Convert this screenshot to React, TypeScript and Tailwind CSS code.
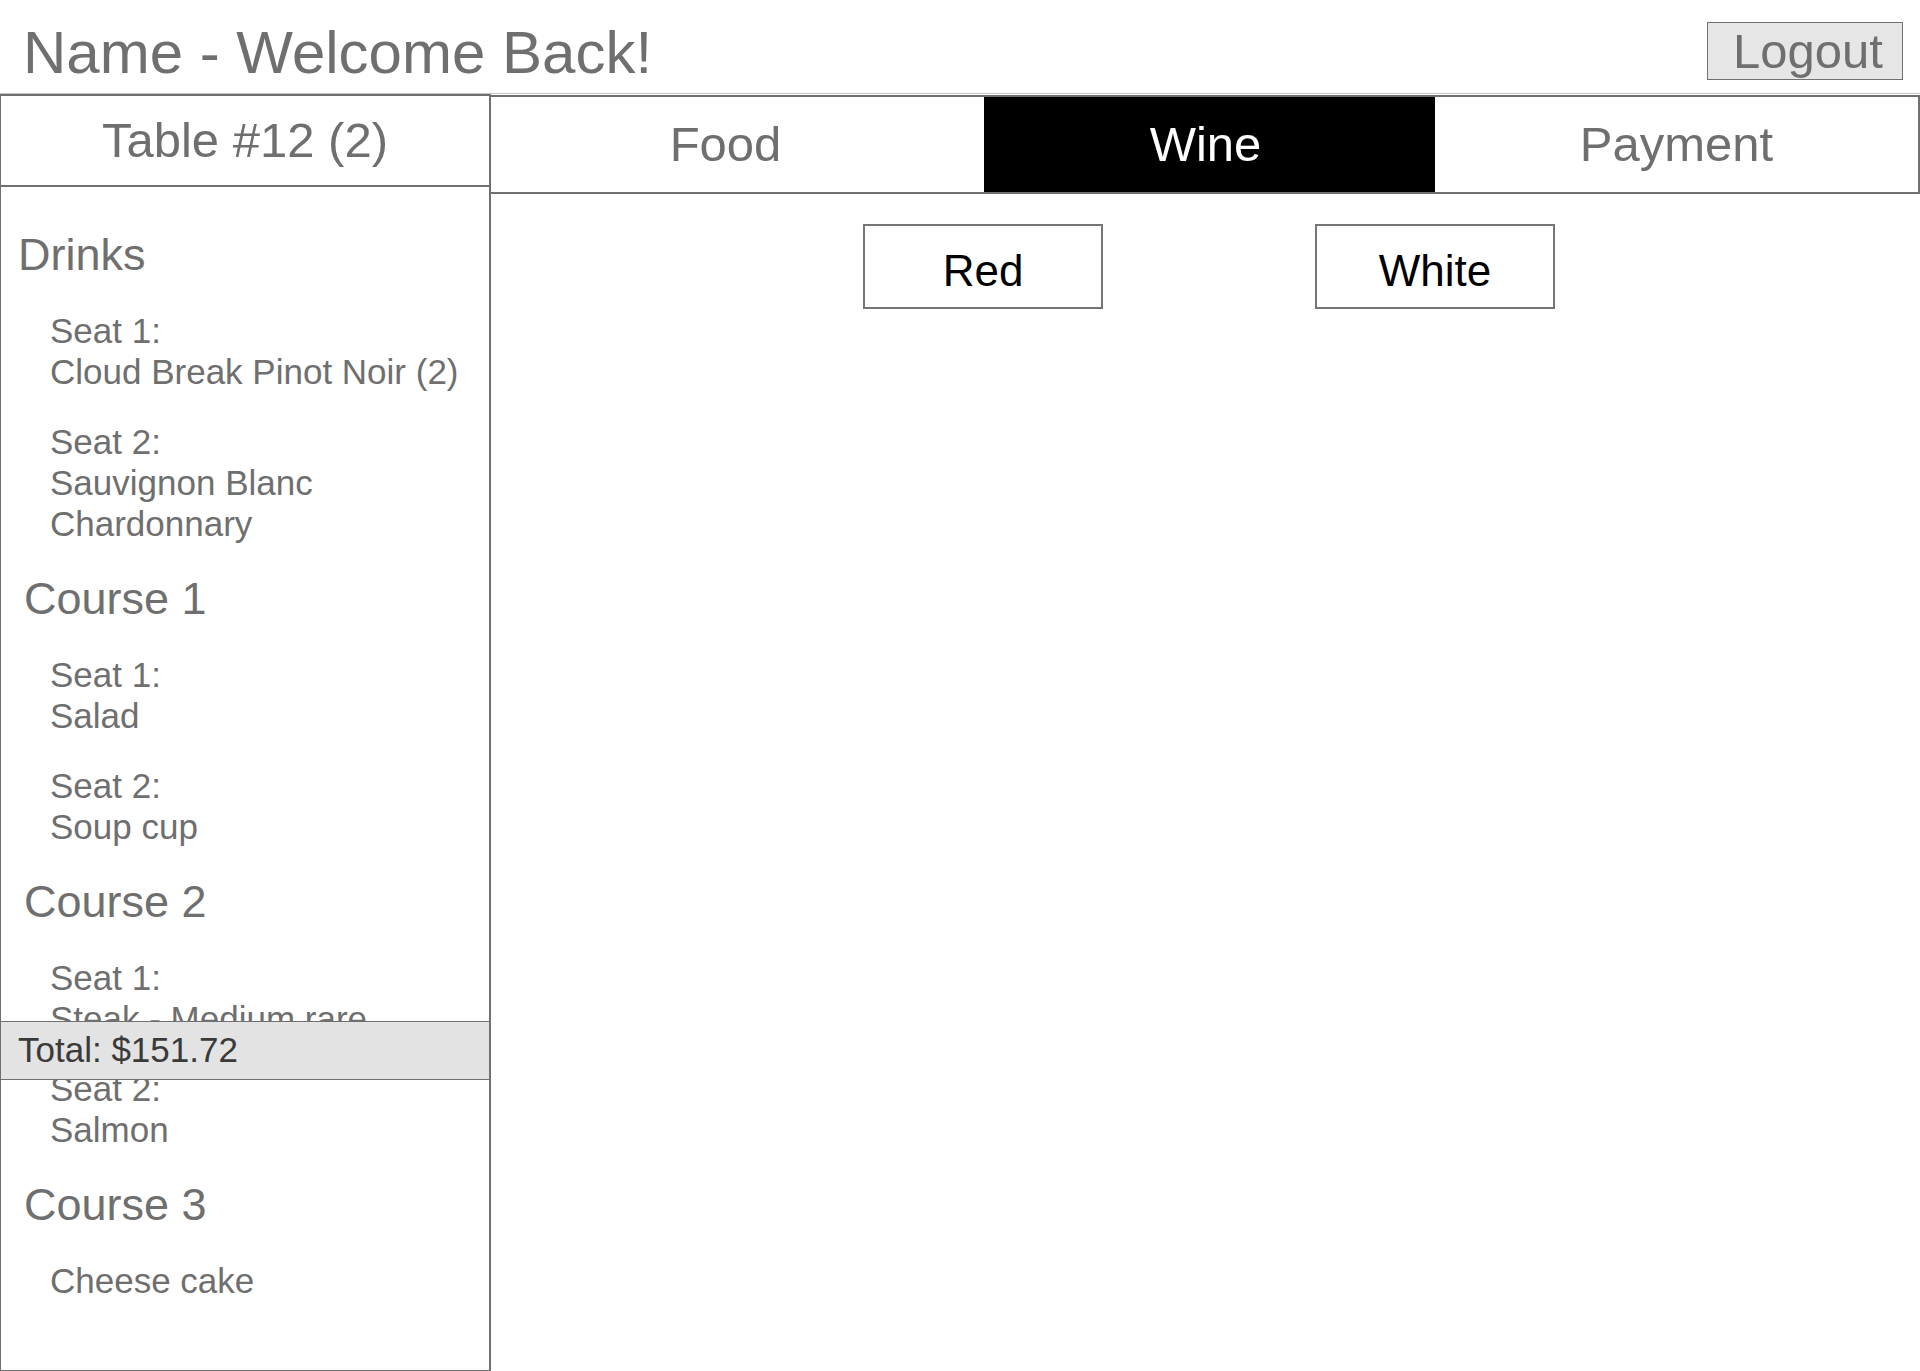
import React from 'react';

type Block = { kind: 'heading'; text: string; indent: string } | { kind: 'item'; lines: string[] };

const order: Block[] = [
  { kind: 'heading', text: 'Drinks', indent: 'pl-[17px]' },
  { kind: 'item', lines: ['Seat 1:', 'Cloud Break Pinot Noir (2)'] },
  { kind: 'item', lines: ['Seat 2:', 'Sauvignon Blanc', 'Chardonnary'] },
  { kind: 'heading', text: 'Course 1', indent: 'pl-[23px]' },
  { kind: 'item', lines: ['Seat 1:', 'Salad'] },
  { kind: 'item', lines: ['Seat 2:', 'Soup cup'] },
  { kind: 'heading', text: 'Course 2', indent: 'pl-[23px]' },
  { kind: 'item', lines: ['Seat 1:', 'Steak - Medium rare'] },
  { kind: 'item', lines: ['Seat 2:', 'Salmon'] },
  { kind: 'heading', text: 'Course 3', indent: 'pl-[23px]' },
  { kind: 'item', lines: ['Cheese cake'] },
];

const tabs = [
  { name: 'Food', width: 'w-[493px] pr-[24px]' },
  { name: 'Wine', width: 'w-[451px] pr-[8px]' },
  { name: 'Payment', width: 'flex-1' },
];

export default function App() {
  const active = 'Wine';

  return (
    <div className="w-[1920px] h-[1371px] bg-white overflow-hidden font-['Liberation_Sans',Arial,sans-serif] text-[#6f6f6f]">
      {/* header */}
      <div className="h-[94px] flex justify-between border-b border-[#c4c4c4]">
        <h1 className="pl-[23px] pt-[18px] text-[60px] leading-[69px] text-[#6f6f6f]">Name - Welcome Back!</h1>
        <button className="mt-[22px] mr-[17px] w-[196px] h-[58px] bg-[#e6e6e6] border border-[#707070] text-[49px] leading-[56px] text-[#6f6f6f] pl-[6px]">
          Logout
        </button>
      </div>

      <div className="flex h-[1277px]">
        {/* order sidebar */}
        <aside className="relative w-[491px] h-full border-x border-b border-t-2 border-[#707070] border-r-2 flex flex-col overflow-hidden">
          <div className="h-[91px] shrink-0 flex items-center justify-center border-b-2 border-[#707070] text-[49px]">
            Table #12 (2)
          </div>
          <div className="flex flex-col gap-[29px] pt-[42px]">
            {order.map((b, i) =>
              b.kind === 'heading' ? (
                <div key={i} className={`${b.indent} text-[45px] leading-[52px]`}>
                  {b.text}
                </div>
              ) : (
                <div key={i} className="pl-[49px] text-[35px] leading-[41px]">
                  {b.lines.map(l => (
                    <div key={l}>{l}</div>
                  ))}
                </div>
              )
            )}
          </div>
          <div className="absolute left-0 right-0 top-[925px] h-[59px] bg-[#e3e3e3] border-y border-[#707070] flex items-center pl-[17px] text-[35px] text-[#3a3a3a]">
            Total: $151.72
          </div>
        </aside>

        {/* main */}
        <main className="flex-1 flex flex-col">
          <div className="flex h-[99px] mt-px border-2 border-l-0 border-[#707070]">
            {tabs.map(t => (
              <button
                key={t.name}
                className={`${t.width} h-full flex items-center justify-center text-[49px] ${
                  t.name === active ? 'bg-black text-white' : 'bg-white text-[#6f6f6f]'
                }`}
              >
                {t.name}
              </button>
            ))}
          </div>
          <div className="flex gap-[212px] pl-[372px] pt-[30px]">
            <button className="w-[240px] h-[85px] pt-[8px] border-2 border-[#767676] bg-white text-black text-[44px]">Red</button>
            <button className="w-[240px] h-[85px] pt-[8px] border-2 border-[#767676] bg-white text-black text-[44px]">White</button>
          </div>
        </main>
      </div>
    </div>
  );
}
